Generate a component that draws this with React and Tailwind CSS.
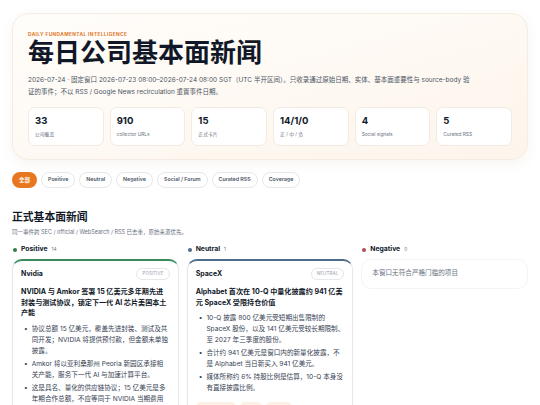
const FONT = { fontFamily: "Inter, 'Noto Sans CJK SC', sans-serif" };

const STATS = [
  { value: "33", label: "公司覆盖" },
  { value: "910", label: "collector URLs" },
  { value: "15", label: "正式卡片" },
  { value: "14/1/0", label: "正 / 中 / 负" },
  { value: "4", label: "Social signals" },
  { value: "5", label: "Curated RSS" },
];

const FILTERS = ["Positive", "Neutral", "Negative", "Social / Forum", "Curated RSS", "Coverage"];

function NewsCard({ company, badge, title, bullets, accent, tags }) {
  return (
    <div className={`rounded-[10px] border border-gray-200 border-t-2 ${accent} bg-white px-[8px] pt-[7px] pb-[8px] shadow-[0_1px_3px_rgba(0,0,0,0.04)]`}>
      <div className="flex items-center justify-between">
        <span className="text-[7px] font-bold text-gray-900">{company}</span>
        <span className="rounded-full border border-gray-200 px-[5px] py-[2px] text-[4.5px] tracking-wide text-gray-400">{badge}</span>
      </div>
      <p className="mt-[7px] text-[7.1px] font-bold leading-[10.5px] text-gray-900">{title}</p>
      <ul className="mt-[5px] space-y-[2px]">
        {bullets.map((b, i) => (
          <li key={i} className="flex gap-[4px] text-[6.6px] leading-[11px] text-gray-700">
            <span className="pl-[3px]">•</span>
            <span>{b}</span>
          </li>
        ))}
      </ul>
      {tags && (
        <div className="mt-[8px] flex gap-[4px]">
          {tags.map((t, i) => (
            <span key={i} className={`h-[10px] rounded-full bg-[#fdf0e4] ${t}`} />
          ))}
        </div>
      )}
    </div>
  );
}

function ColumnHead({ dot, label, count }) {
  return (
    <div className="flex items-center gap-[4px] pl-[1px]">
      <span className={`h-[4px] w-[4px] rounded-full ${dot}`} />
      <span className="text-[6.8px] font-bold text-gray-900">{label}</span>
      <span className="text-[4.8px] text-gray-500">{count}</span>
    </div>
  );
}

export default function App() {
  return (
    <div className="h-[405px] overflow-hidden bg-white px-[12px] pt-[13px]" style={FONT}>
      <section className="rounded-[16px] border border-[#f6ece2] bg-gradient-to-br from-[#fffdfa] to-[#fdf5ec] px-[15px] pt-[17px] pb-[13px] shadow-[0_4px_14px_rgba(120,80,40,0.06)]">
        <p className="text-[4.8px] font-bold tracking-[0.08em] text-[#e07a2c]">DAILY FUNDAMENTAL INTELLIGENCE</p>
        <h1 className="mt-[1px] text-[26px] font-bold leading-[28px] text-gray-900">每日公司基本面新闻</h1>
        <p className="mt-[7px] max-w-[445px] text-[6.5px] leading-[12px] text-gray-600">
          2026-07-24 · 固定窗口 2026-07-23 08:00–2026-07-24 08:00 SGT（UTC 半开区间）。只收录通过原始日期、实体、基本面重要性与 source-body 验证的事件；不以 RSS / Google News recirculation 重置事件日期。
        </p>
        <div className="mt-[9px] grid grid-cols-6 gap-[6px]">
          {STATS.map((s) => (
            <div key={s.label} className="h-[39px] rounded-[7px] border border-[#f3ebe2] bg-white px-[6px] pt-[8px]">
              <div className="text-[9.5px] font-bold leading-[10px] text-gray-900">{s.value}</div>
              <div className="mt-[5px] text-[4.8px] text-gray-500">{s.label}</div>
            </div>
          ))}
        </div>
      </section>

      <div className="mt-[12px] flex gap-[4px]">
        <span className="flex h-[16px] items-center rounded-full bg-[#e8771f] px-[7px] text-[5.5px] font-bold text-white">全部</span>
        {FILTERS.map((f) => (
          <span key={f} className="flex h-[16px] items-center rounded-full border border-gray-200 bg-white px-[6px] text-[5.3px] font-semibold text-gray-600">
            {f}
          </span>
        ))}
      </div>

      <h2 className="mt-[24px] text-[10.8px] font-bold leading-[12px] text-gray-900">正式基本面新闻</h2>
      <p className="mt-[4px] text-[5.5px] text-gray-500">同一事件跨 SEC / official / WebSearch / RSS 已去重，原始来源优先。</p>

      <div className="mt-[8px] grid grid-cols-3 gap-[8px]">
        <div className="space-y-[4px]">
          <ColumnHead dot="bg-[#2f7d4f]" label="Positive" count="14" />
          <NewsCard
            company="Nvidia"
            badge="POSITIVE"
            accent="border-t-[#3a8a5a]"
            title="NVIDIA 与 Amkor 签署 15 亿美元多年期先进封装与测试协议，锁定下一代 AI 芯片美国本土产能"
            bullets={[
              "协议总额 15 亿美元，覆盖先进封装、测试及共同开发；NVIDIA 将提供预付款，但金额未单独披露。",
              "Amkor 将以亚利桑那州 Peoria 新园区承接相关产能，服务下一代 AI 与加速计算平台。",
              "这是具名、量化的供应链协议；15 亿美元是多年期合作总额，不应等同于 NVIDIA 当期费用或收入。",
            ]}
          />
        </div>
        <div className="space-y-[4px]">
          <ColumnHead dot="bg-[#4d6b8c]" label="Neutral" count="1" />
          <NewsCard
            company="SpaceX"
            badge="NEUTRAL"
            accent="border-t-[#4d6b8c]"
            title="Alphabet 首次在 10-Q 中量化披露约 941 亿美元 SpaceX 受限持仓价值"
            bullets={[
              "10-Q 披露 800 亿美元受短期出售限制的 SpaceX 股份，以及 141 亿美元受较长期限制、至 2027 年三季度的股份。",
              "合计约 941 亿美元是窗口内的新量化披露，不是 Alphabet 当日新买入 941 亿美元。",
              "媒体所称约 6% 持股比例是估算，10-Q 本身没有直接披露比例。",
            ]}
            tags={["w-[40px]", "w-[22px]", "w-[26px]"]}
          />
        </div>
        <div className="space-y-[4px]">
          <ColumnHead dot="bg-[#b64a5c]" label="Negative" count="0" />
          <div className="flex h-[30px] items-center rounded-[10px] border border-gray-100 bg-white px-[10px] text-[6.6px] text-gray-500">
            本窗口无符合严格门槛的项目
          </div>
        </div>
      </div>
    </div>
  );
}
